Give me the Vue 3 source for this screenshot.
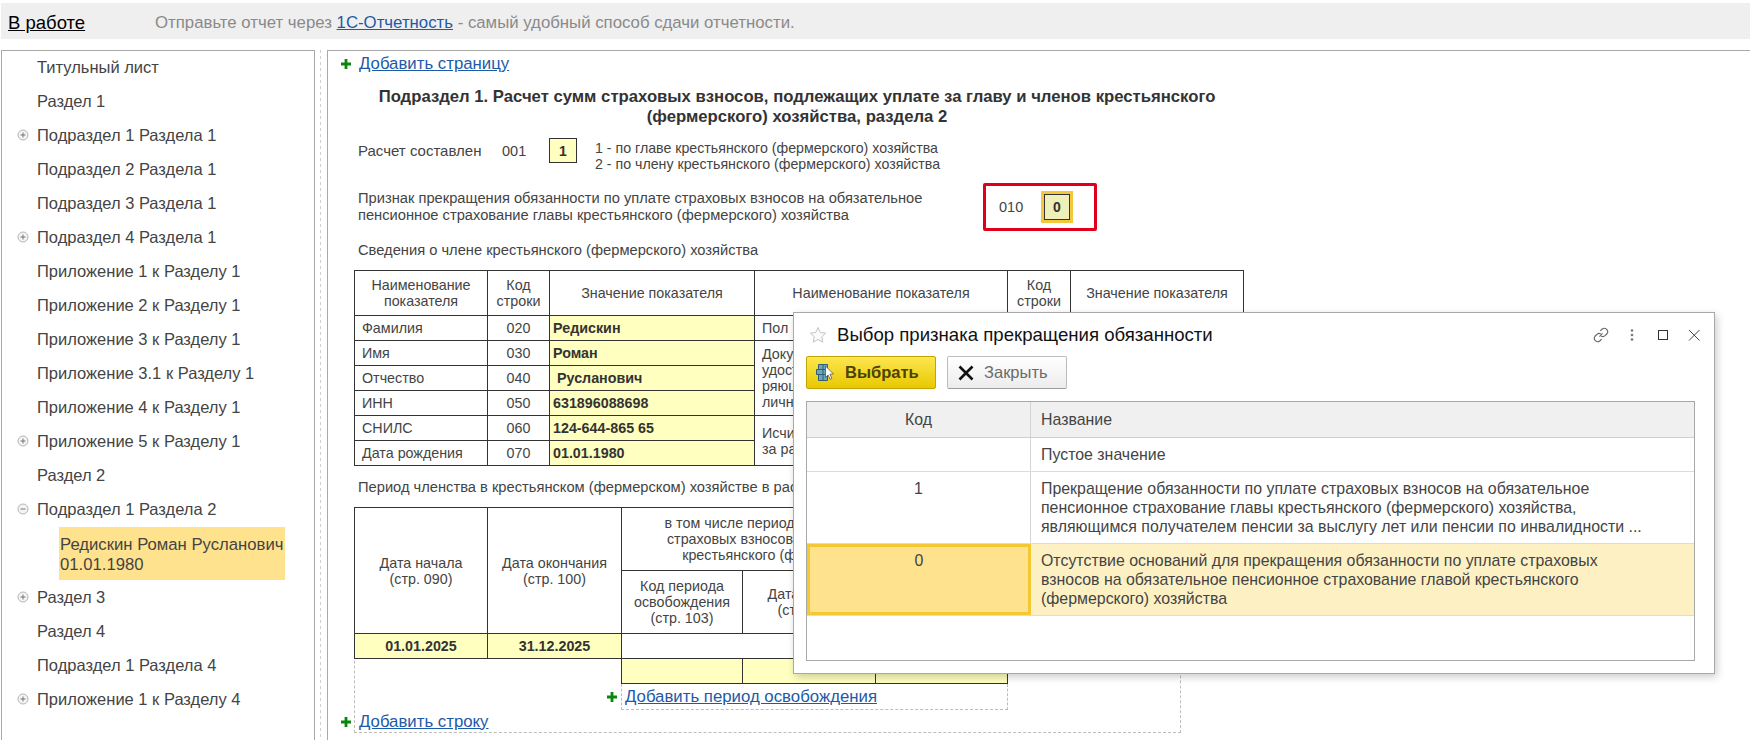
<template>
  <div class="page">
    <header class="topbar">
      <a class="topbar__state">В работе</a>
      <span class="topbar__msg">Отправьте отчет через <a class="link">1С-Отчетность</a> - самый удобный способ сдачи отчетности.</span>
    </header>

    <div class="workspace">
      <nav class="tree">
        <template v-for="item in tree" :key="item.label">
          <div class="tree__row">
            <svg v-if="item.toggle" class="tree__toggle" viewBox="0 0 12 12">
              <circle cx="6" cy="6" r="5" fill="#f4f4f4" stroke="#b5b5b5" />
              <path :d="item.toggle === 'open' ? 'M3.5 6h5' : 'M3.5 6h5M6 3.5v5'" stroke="#777" fill="none" />
            </svg>
            <span>{{ item.label }}</span>
          </div>
          <div v-if="item.child" class="tree__child">{{ item.child[0] }}<br />{{ item.child[1] }}</div>
        </template>
      </nav>
      <div class="splitter" />

      <main class="form">
        <div class="add add--page">
          <svg class="plus" viewBox="0 0 10 10"><path d="M3.6 0h2.8v3.6H10v2.8H6.4V10H3.6V6.4H0V3.6h3.6z" /></svg>
          <a class="link">Добавить страницу</a>
        </div>

        <h1 class="form__title">
          Подраздел 1. Расчет сумм страховых взносов, подлежащих уплате за главу и членов крестьянского<br />
          (фермерского) хозяйства, раздела 2
        </h1>

        <div class="line line--calc">
          <span class="line__label">Расчет составлен</span>
          <span class="line__code">001</span>
          <span class="cell-input">1</span>
          <div class="line__hint">
            1 - по главе крестьянского (фермерского) хозяйства<br />
            2 - по члену крестьянского (фермерского) хозяйства
          </div>
        </div>

        <div class="line line--sign">
          <div class="line__text">
            Признак прекращения обязанности по уплате страховых взносов на обязательное<br />
            пенсионное страхование главы крестьянского (фермерского) хозяйства
          </div>
          <div class="marked">
            <span class="marked__code">010</span>
            <span class="cell-input cell-input--focus">0</span>
          </div>
        </div>

        <p class="form__caption form__caption--member">Сведения о члене крестьянского (фермерского) хозяйства</p>

        <table class="grid grid--member">
          <colgroup>
            <col v-for="(w, i) in memberCols" :key="i" :style="{ width: w + 'px' }" />
          </colgroup>
          <tr class="grid__head">
            <th>Наименование<br />показателя</th>
            <th>Код<br />строки</th>
            <th>Значение показателя</th>
            <th>Наименование показателя</th>
            <th>Код<br />строки</th>
            <th>Значение показателя</th>
          </tr>
          <tr v-for="(row, i) in member" :key="row.code">
            <td class="grid__name">{{ row.name }}</td>
            <td class="grid__code">{{ row.code }}</td>
            <td class="grid__value" :class="{ 'grid__value--shift': row.shift }">{{ row.value }}</td>
            <td v-if="side[i]" class="grid__name grid__name--tight" :rowspan="side[i].span" v-html="side[i].text" />
            <td v-if="side[i]" class="grid__code" :rowspan="side[i].span" />
            <td v-if="side[i]" class="grid__value" :rowspan="side[i].span" />
          </tr>
        </table>

        <p class="form__caption form__caption--period">Период членства в крестьянском (фермерском) хозяйстве в расчетном периоде</p>

        <div class="frame">
          <table class="grid grid--period">
            <colgroup>
              <col v-for="(w, i) in periodCols" :key="i" :style="{ width: w + 'px' }" />
            </colgroup>
            <tr class="grid__head grid__head--top">
              <th rowspan="2">Дата начала<br />(стр. 090)</th>
              <th rowspan="2">Дата окончания<br />(стр. 100)</th>
              <th colspan="3">
                в том числе период освобождения от уплаты<br />
                страховых взносов в связи с деятельностью<br />
                крестьянского (фермерского) хозяйства
              </th>
            </tr>
            <tr class="grid__head grid__head--sub">
              <th>Код периода<br />освобождения<br />(стр. 103)</th>
              <th>Дата начала<br />(стр. 101)</th>
              <th>Дата окончания<br />(стр. 102)</th>
            </tr>
            <tr>
              <td class="grid__value grid__value--date">01.01.2025</td>
              <td class="grid__value grid__value--date">31.12.2025</td>
              <td colspan="3" />
            </tr>
            <tr>
              <td class="grid__blank" colspan="2" />
              <td class="grid__value" />
              <td class="grid__value" />
              <td class="grid__value" />
            </tr>
          </table>
          <div class="add add--period">
            <svg class="plus" viewBox="0 0 10 10"><path d="M3.6 0h2.8v3.6H10v2.8H6.4V10H3.6V6.4H0V3.6h3.6z" /></svg>
            <a class="link">Добавить период освобождения</a>
          </div>
          <div class="add add--row">
            <svg class="plus" viewBox="0 0 10 10"><path d="M3.6 0h2.8v3.6H10v2.8H6.4V10H3.6V6.4H0V3.6h3.6z" /></svg>
            <a class="link">Добавить строку</a>
          </div>
        </div>
      </main>
    </div>

    <section class="modal">
      <div class="modal__head">
        <svg class="modal__star" viewBox="0 0 18 18">
          <path d="M9 1.5l2.3 5 5.4.6-4 3.7 1.1 5.4L9 13.5l-4.8 2.7 1.1-5.4-4-3.7 5.4-.6z" fill="#fbfbfb" stroke="#c4c4c4" />
        </svg>
        <span class="modal__title">Выбор признака прекращения обязанности</span>
        <div class="modal__tools">
          <svg class="tool" viewBox="0 0 16 16">
            <g transform="translate(-1 -1) scale(1.125)">
              <path d="M6.6 9.4l2.8-2.8M7.4 4.4l1.7-1.7a3 3 0 0 1 4.2 4.2l-1.7 1.7a3 3 0 0 1-3.4.5M8.6 11.6l-1.7 1.7a3 3 0 0 1-4.2-4.2l1.7-1.7a3 3 0 0 1 3.4-.5" fill="none" stroke="#666" />
            </g>
          </svg>
          <svg class="tool" viewBox="0 0 16 16">
            <circle cx="8" cy="3.5" r="1.3" fill="#777" /><circle cx="8" cy="8" r="1.3" fill="#777" /><circle cx="8" cy="12.5" r="1.3" fill="#777" />
          </svg>
          <svg class="tool" viewBox="0 0 16 16"><rect x="3.5" y="3.5" width="9" height="9" fill="none" stroke="#333" /></svg>
          <svg class="tool" viewBox="0 0 16 16"><path d="M3 3l10.500 10.500M13.500 3L3 13.500" fill="none" stroke="#444" /></svg>
        </div>
      </div>

      <div class="modal__actions">
        <button class="btn btn--primary">
          <svg class="btn__icon" viewBox="0 0 20 20">
            <path d="M3.500 1.500h9v5h-9zM1.500 6.500h11v5h-11zM3.500 11.500h9v6h-9z" fill="#6ba6bf" stroke="#2f5f70" />
            <path d="M8 1.500v16" stroke="#2f5f70" fill="none" />
            <path d="M10.500 3l8 8-3.600.2 2 4.300-1.800.8-2-4.300-2.600 2.500z" fill="#fff" stroke="#555" stroke-width=".8" />
          </svg>
          Выбрать
        </button>
        <button class="btn">
          <svg class="btn__icon btn__icon--close" viewBox="0 0 16 16">
            <path d="M1.500 1.500l13 13M14.500 1.500l-13 13" fill="none" stroke="#111" stroke-width="2.600" />
          </svg>
          Закрыть
        </button>
      </div>

      <div class="list">
        <div class="list__head">
          <div class="list__code">Код</div>
          <div class="list__name">Название</div>
        </div>
        <div
          v-for="row in choices"
          :key="row.code"
          class="list__row"
          :class="{ 'list__row--current': row.current, 'list__row--single': !row.code }"
        >
          <div class="list__code">{{ row.code }}</div>
          <div class="list__name">
            <template v-for="(l, i) in row.lines" :key="i">{{ l }}<br /></template>
          </div>
        </div>
      </div>
    </section>
  </div>
</template>

<script setup>
const tree = [
  { label: "Титульный лист" },
  { label: "Раздел 1" },
  { label: "Подраздел 1 Раздела 1", toggle: "closed" },
  { label: "Подраздел 2 Раздела 1" },
  { label: "Подраздел 3 Раздела 1" },
  { label: "Подраздел 4 Раздела 1", toggle: "closed" },
  { label: "Приложение 1 к Разделу 1" },
  { label: "Приложение 2 к Разделу 1" },
  { label: "Приложение 3 к Разделу 1" },
  { label: "Приложение 3.1 к Разделу 1" },
  { label: "Приложение 4 к Разделу 1" },
  { label: "Приложение 5 к Разделу 1", toggle: "closed" },
  { label: "Раздел 2" },
  {
    label: "Подраздел 1 Раздела 2",
    toggle: "open",
    child: ["Редискин Роман Русланович", "01.01.1980"],
  },
  { label: "Раздел 3", toggle: "closed" },
  { label: "Раздел 4" },
  { label: "Подраздел 1 Раздела 4" },
  { label: "Приложение 1 к Разделу 4", toggle: "closed" },
];

const memberCols = [133, 62, 205, 253, 63, 173];
const periodCols = [133, 134, 121, 133, 132];

const member = [
  { name: "Фамилия", code: "020", value: "Редискин" },
  { name: "Имя", code: "030", value: "Роман" },
  { name: "Отчество", code: "040", value: "Русланович", shift: true },
  { name: "ИНН", code: "050", value: "631896088698" },
  { name: "СНИЛС", code: "060", value: "124-644-865 65" },
  { name: "Дата рождения", code: "070", value: "01.01.1980" },
];

const side = {
  0: { span: 1, text: "Пол" },
  1: { span: 3, text: "Документ,<br>удостове-<br>ряющий<br>личность" },
  4: { span: 2, text: "Исчислено<br>за расчетный период" },
};

const choices = [
  { code: "", lines: ["Пустое значение"] },
  {
    code: "1",
    lines: [
      "Прекращение обязанности по уплате страховых взносов на обязательное",
      "пенсионное страхование главы крестьянского (фермерского) хозяйства,",
      "являющимся получателем пенсии за выслугу лет или пенсии по инвалидности ...",
    ],
  },
  {
    code: "0",
    current: true,
    lines: [
      "Отсутствие оснований для прекращения обязанности по уплате страховых",
      "взносов на обязательное пенсионное страхование главой крестьянского",
      "(фермерского) хозяйства",
    ],
  },
];
</script>

<style>
html,
body {
  margin: 0;
  background: #fff;
}
</style>

<style scoped>
.page {
  position: relative;
  width: 1750px;
  height: 740px;
  overflow: hidden;
  display: flex;
  flex-direction: column;
  font-family: "Liberation Sans", Arial, sans-serif;
  color: #444;
  font-size: 14px;
}

.link {
  color: #1d5aa8;
  text-decoration: underline;
}

.topbar {
  flex: none;
  box-sizing: border-box;
  height: 36px;
  margin: 3px 0 11px 1px;
  padding: 3px 0 0 7px;
  display: flex;
  align-items: center;
  background: #efefef;
}
.topbar__state {
  width: 147px;
  font-size: 18.5px;
  color: #000;
  text-decoration: underline;
}
.topbar__msg {
  font-size: 16.8px;
  color: #8a8a8a;
}

.workspace {
  flex: 1;
  display: flex;
  min-height: 0;
}

.tree {
  flex: none;
  box-sizing: border-box;
  width: 314px;
  margin-left: 1px;
  border: 1px solid #a9a9a9;
  border-bottom: 0;
  font-size: 16.5px;
}
.tree__row {
  position: relative;
  box-sizing: border-box;
  height: 34px;
  padding: 0 0 2px 35px;
  display: flex;
  align-items: center;
  color: #444;
}
.tree__toggle {
  position: absolute;
  left: 15px;
  top: 10px;
  width: 12px;
  height: 12px;
}
.tree__child {
  width: 226px;
  height: 53px;
  margin: 0 0 1px 57px;
  padding: 8px 0 0 1px;
  box-sizing: border-box;
  line-height: 20px;
  background: #fee28d;
  color: #444;
  font-size: 16.7px;
  white-space: nowrap;
}

.splitter {
  flex: none;
  width: 12px;
  background: linear-gradient(#cfcfcf 50%, transparent 50%) 5px 0 / 1px 6px repeat-y;
}

.form {
  flex: 1;
  min-width: 0;
  border: 1px solid #a9a9a9;
  border-width: 1px 0 0 1px;
  padding: 0 0 0 26px;
}

.add {
  display: flex;
  align-items: center;
  font-size: 16.8px;
}
.plus {
  flex: none;
  width: 10px;
  height: 10px;
  fill: #0a870a;
}
.add--page {
  height: 26px;
  margin-left: -13px;
  gap: 8px;
}

.form__title {
  width: 880px;
  margin: 10px 0 0 3px;
  font-size: 16.7px;
  line-height: 20px;
  font-weight: 700;
  text-align: center;
  color: #333;
  white-space: nowrap;
}

.line {
  display: flex;
  font-size: 14.7px;
}
.line--calc {
  height: 25px;
  margin: 11px 0 0 4px;
  align-items: center;
}
.line__label {
  width: 144px;
  font-size: 15px;
}
.line__code {
  width: 47px;
  font-size: 14.5px;
}
.line__hint {
  margin-left: 18px;
  line-height: 16px;
  font-size: 14.2px;
  padding-top: 11px;
  white-space: nowrap;
}

.cell-input {
  box-sizing: border-box;
  width: 28px;
  height: 25px;
  display: flex;
  align-items: center;
  justify-content: center;
  border: 1px solid #333;
  background: #ffffbf;
  font-size: 14px;
  font-weight: 700;
  color: #333;
}
.cell-input--focus {
  width: 26px;
  height: 26px;
  background: #efefb9;
  outline: 3px solid #f3c83c;
}

.line--sign {
  height: 48px;
  margin: 20px 0 0 4px;
  align-items: center;
}
.line__text {
  width: 625px;
  line-height: 17px;
  white-space: nowrap;
}
.marked {
  box-sizing: border-box;
  width: 114px;
  height: 48px;
  display: flex;
  align-items: center;
  padding-left: 13px;
  border: 3px solid #e0001b;
  border-radius: 2px;
}
.marked__code {
  width: 45px;
  font-size: 14.5px;
}

.form__caption {
  margin: 0 0 0 4px;
  font-size: 14.7px;
  line-height: 16px;
  white-space: nowrap;
}
.form__caption--member {
  margin-top: 11px;
}
.form__caption--period {
  margin-top: 13px;
}

.grid {
  table-layout: fixed;
  border-collapse: collapse;
  font-size: 14.3px;
}
.grid th,
.grid td {
  box-sizing: border-box;
  padding: 0;
  border: 1px solid #333;
}
.grid th {
  font-weight: 400;
  line-height: 16px;
  height: 45px;
}
.grid td {
  height: 25px;
}
.grid--member {
  width: 889px;
  margin-top: 12px;
}
.grid__name {
  padding-left: 7px !important;
}
.grid__name--tight {
  line-height: 16px;
}
.grid__code {
  text-align: center;
}
.grid__value {
  padding-left: 3px !important;
  background: #ffffbf;
  font-weight: 700;
  color: #333;
}
.grid__value--shift {
  padding-left: 7px !important;
}
.grid__value--date {
  padding-left: 0 !important;
  text-align: center;
}
.grid__head--top th {
  height: 63px;
}
.grid__head--sub th {
  height: 63px;
}
.grid .grid__blank {
  border: 0;
  border-top: 1px solid #333;
  background: #fff;
}

.frame {
  box-sizing: border-box;
  width: 827px;
  margin-top: 12px;
  border: 1px dashed #bdbdbd;
  border-top: 0;
  height: 226px;
}
.grid--period {
  width: 653px;
  margin-left: -1px;
}
.add--period {
  box-sizing: border-box;
  width: 387px;
  height: 26px;
  margin-left: 266px;
  padding-left: 6px;
  gap: 8px;
  border: 1px dashed #bdbdbd;
  border-top: 0;
}
.add--period .plus {
  margin-left: -21px;
}
.add--row {
  height: 23px;
  margin-left: -14px;
  gap: 8px;
}

.modal {
  position: absolute;
  left: 793px;
  top: 312px;
  box-sizing: border-box;
  width: 922px;
  height: 362px;
  padding: 0 19px 0 12px;
  background: #fff;
  border: 1px solid #a8a8a8;
  box-shadow: 2px 3px 8px rgba(0, 0, 0, 0.2);
  display: flex;
  flex-direction: column;
}
.modal__head {
  flex: none;
  height: 43px;
  display: flex;
  align-items: center;
}
.modal__star {
  width: 18px;
  height: 18px;
  margin-left: 3px;
}
.modal__title {
  margin-left: 10px;
  font-size: 18.6px;
  color: #111;
}
.modal__tools {
  margin-left: auto;
  margin-right: -7px;
  display: flex;
  gap: 15px;
}
.tool {
  width: 16px;
  height: 16px;
}

.modal__actions {
  flex: none;
  display: flex;
  gap: 11px;
}
.btn {
  box-sizing: border-box;
  width: 120px;
  height: 33px;
  padding: 0 0 0 10px;
  display: flex;
  align-items: center;
  gap: 10px;
  border: 1px solid #bdbdbd;
  border-bottom-color: #9c9c9c;
  border-radius: 2px;
  background: linear-gradient(#ffffff, #ececec);
  font: 16.5px "Liberation Sans", Arial, sans-serif;
  color: #6b6b6b;
}
.btn--primary {
  width: 130px;
  padding-left: 8px;
  border-color: #c2a500;
  background: linear-gradient(#fde64f, #e9c802);
  font-weight: 700;
  color: #4d4300;
}
.btn__icon {
  width: 20px;
  height: 20px;
}
.btn__icon--close {
  width: 16px;
  height: 16px;
}

.list {
  flex: none;
  box-sizing: border-box;
  width: 889px;
  height: 260px;
  margin-top: 12px;
  border: 1px solid #a8a8a8;
  font-size: 15.9px;
  color: #444;
}
.list__head {
  height: 35px;
  display: flex;
  background: #f0f0f0;
  border-bottom: 1px solid #cfcfcf;
}
.list__head > div {
  display: flex;
  align-items: center;
}
.list__head .list__code {
  justify-content: center;
}
.list__code {
  flex: none;
  box-sizing: border-box;
  width: 224px;
  text-align: center;
  border-right: 1px solid #d4d4d4;
}
.list__name {
  flex: 1;
  padding-left: 10px;
  white-space: nowrap;
}
.list__row {
  box-sizing: border-box;
  height: 72px;
  display: flex;
  line-height: 19px;
  border-bottom: 1px solid #dcdcdc;
}
.list__row > div {
  padding-top: 7px;
}
.list__row--single {
  height: 34px;
}
.list__row--current {
  background: #fdf1c4;
}
.list__row--current .list__code {
  background: #fee28d;
  outline: 3px solid #f4c833;
  outline-offset: -3px;
  border-right: 0;
}
</style>
